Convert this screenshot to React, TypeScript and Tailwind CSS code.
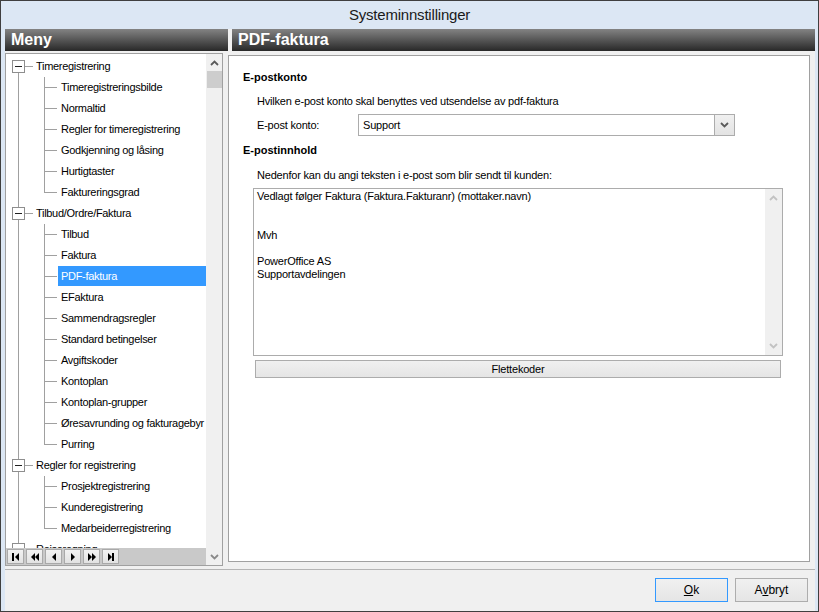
import React from "react";

type Group = { label: string; children: string[] };

const TREE: Group[] = [
  {
    label: "Timeregistrering",
    children: [
      "Timeregistreringsbilde",
      "Normaltid",
      "Regler for timeregistrering",
      "Godkjenning og låsing",
      "Hurtigtaster",
      "Faktureringsgrad",
    ],
  },
  {
    label: "Tilbud/Ordre/Faktura",
    children: [
      "Tilbud",
      "Faktura",
      "PDF-faktura",
      "EFaktura",
      "Sammendragsregler",
      "Standard betingelser",
      "Avgiftskoder",
      "Kontoplan",
      "Kontoplan-grupper",
      "Øresavrunding og fakturagebyr",
      "Purring",
    ],
  },
  {
    label: "Regler for registrering",
    children: ["Prosjektregistrering", "Kunderegistrering", "Medarbeiderregistrering"],
  },
  { label: "Reiseregning", children: ["Reiseregning"] },
];

const SELECTED = "PDF-faktura";

const MAIL_BODY = [
  "Vedlagt følger Faktura (Faktura.Fakturanr) (mottaker.navn)",
  "",
  "",
  "Mvh",
  "",
  "PowerOffice AS",
  "Supportavdelingen",
];

function Chevron({ up = false, color = "#5a5a5a" }: { up?: boolean; color?: string }) {
  return (
    <svg width="9" height="6" viewBox="0 0 9 6">
      <polyline
        points={up ? "1,5 4.5,1.5 8,5" : "1,1 4.5,4.5 8,1"}
        fill="none"
        stroke={color}
        strokeWidth="1.8"
      />
    </svg>
  );
}

function ParentRow({ label, first }: { label: string; first: boolean }) {
  return (
    <div className="relative h-[21px] shrink-0 flex items-center pl-[30px] whitespace-nowrap">
      {!first && <span className="absolute left-[12px] top-0 h-[4px] w-px bg-[#a0a0a0]" />}
      <span className="absolute left-[12px] top-[17px] h-[4px] w-px bg-[#a0a0a0]" />
      <span className="absolute left-[6px] top-[4px] h-[13px] w-[13px] border border-[#8e8e8e] bg-white flex items-center justify-center">
        <span className="h-px w-[7px] bg-[#222]" />
      </span>
      <span className="absolute left-[19px] top-[10px] h-px w-[8px] bg-[#a0a0a0]" />
      <span>{label}</span>
    </div>
  );
}

function ChildRow({ label, last }: { label: string; last: boolean }) {
  const selected = label === SELECTED;
  return (
    <div className="relative h-[21px] shrink-0 whitespace-nowrap">
      <span className="absolute left-[12px] top-0 h-[21px] w-px bg-[#a0a0a0]" />
      <span
        className={`absolute left-[38px] top-0 w-px bg-[#a0a0a0] ${last ? "h-[11px]" : "h-[21px]"}`}
      />
      <span className="absolute left-[39px] top-[10px] h-px w-[12px] bg-[#a0a0a0]" />
      <div
        className={`ml-[52px] h-[20px] px-[3px] flex items-center overflow-hidden ${
          selected ? "bg-[#3399ff] text-white" : ""
        }`}
      >
        {label}
      </div>
    </div>
  );
}

function NavButton({ kind }: { kind: string }) {
  const tri = (dir: "l" | "r", x: number) =>
    dir === "l" ? `${x + 4},0 ${x + 4},8 ${x},4` : `${x},0 ${x},8 ${x + 4},4`;
  let shapes: React.ReactNode = null;
  if (kind === "first")
    shapes = (
      <>
        <rect x="1" y="0" width="2" height="8" fill="#000" />
        <polygon points={tri("l", 4)} fill="#000" />
      </>
    );
  if (kind === "prevPage")
    shapes = (
      <>
        <polygon points={tri("l", 1)} fill="#000" />
        <polygon points={tri("l", 5)} fill="#000" />
      </>
    );
  if (kind === "prev") shapes = <polygon points={tri("l", 3)} fill="#000" />;
  if (kind === "next") shapes = <polygon points={tri("r", 3)} fill="#000" />;
  if (kind === "nextPage")
    shapes = (
      <>
        <polygon points={tri("r", 1)} fill="#000" />
        <polygon points={tri("r", 5)} fill="#000" />
      </>
    );
  if (kind === "last")
    shapes = (
      <>
        <polygon points={tri("r", 2)} fill="#000" />
        <rect x="6" y="0" width="2" height="8" fill="#000" />
      </>
    );
  return (
    <div className="h-[15px] w-[17px] border border-[#a9a9a9] bg-[linear-gradient(to_bottom,#f2f2f2,#e2e2e2)] flex items-center justify-center">
      <svg width="10" height="8" viewBox="0 0 10 8">
        {shapes}
      </svg>
    </div>
  );
}

function MenuTree() {
  return (
    <div className="w-[218px] h-[513px] border border-[#a0a0a0] bg-white flex">
      <div className="flex-1 min-w-0 flex flex-col">
        <div className="flex-1 min-h-0 overflow-hidden pt-[2px] flex flex-col text-[11px] tracking-[-0.3px] text-black">
          {TREE.map((g, gi) => (
            <React.Fragment key={g.label}>
              <ParentRow label={g.label} first={gi === 0} />
              {g.label !== "Reiseregning" &&
                g.children.map((c, ci) => (
                  <ChildRow key={c} label={c} last={ci === g.children.length - 1} />
                ))}
            </React.Fragment>
          ))}
        </div>
        <div className="h-[17px] shrink-0 bg-[#c9c9c9] flex items-center gap-[2px] pl-[1px]">
          {["first", "prevPage", "prev", "next", "nextPage", "last"].map((k) => (
            <NavButton key={k} kind={k} />
          ))}
        </div>
      </div>
      <div className="w-[16px] shrink-0 bg-[#f0f0f0] flex flex-col items-center">
        <div className="h-[17px] flex items-center justify-center">
          <Chevron up />
        </div>
        <div className="h-[17px] w-[15px] bg-[#cdcdcd]" />
        <div className="flex-1" />
        <div className="h-[17px] flex items-center justify-center">
          <Chevron color="#8a8a8a" />
        </div>
      </div>
    </div>
  );
}

function SettingsPanel() {
  return (
    <div className="mt-[2px] w-[582px] h-[507px] border border-[#a0a0a0] bg-white pt-[14px] pl-[14px] text-[11px] tracking-[-0.2px] text-black">
      <div className="h-[14px] leading-[14px] font-bold tracking-normal">E-postkonto</div>
      <div className="mt-[10px] ml-[14px] h-[14px] leading-[14px]">
        Hvilken e-post konto skal benyttes ved utsendelse av pdf-faktura
      </div>
      <div className="mt-[6px] ml-[14px] flex items-center h-[22px]">
        <div className="w-[101px]">E-post konto:</div>
        <div className="w-[377px] h-[22px] border border-[#acacac] bg-white flex items-center">
          <div className="flex-1 pl-[4px]">Support</div>
          <div className="w-[20px] h-[20px] border-l border-[#acacac] bg-[linear-gradient(to_bottom,#f0f0f0,#e3e3e3)] flex items-center justify-center">
            <Chevron />
          </div>
        </div>
      </div>
      <div className="mt-[7px] h-[14px] leading-[14px] font-bold tracking-normal">E-postinnhold</div>
      <div className="mt-[11px] ml-[14px] h-[14px] leading-[14px]">
        Nedenfor kan du angi teksten i e-post som blir sendt til kunden:
      </div>
      <div className="mt-[6px] ml-[10px] w-[530px] h-[168px] border border-[#acacac] bg-white flex">
        <div className="flex-1 pt-[1px] pl-[3px] leading-[13px]">
          {MAIL_BODY.map((l, i) => (
            <div key={i} className="h-[13px] whitespace-nowrap">
              {l}
            </div>
          ))}
        </div>
        <div className="w-[17px] bg-[#f0f0f0] flex flex-col items-center justify-between py-[6px]">
          <Chevron up color="#c2c2c2" />
          <Chevron color="#c2c2c2" />
        </div>
      </div>
      <button className="mt-[4px] ml-[12px] w-[526px] h-[18px] border border-[#acacac] bg-[linear-gradient(to_bottom,#f0f0f0,#e5e5e5)] flex items-center justify-center text-[11px]">
        Flettekoder
      </button>
    </div>
  );
}

export default function App() {
  return (
    <div className="w-[819px] h-[612px] border border-[#3f3f3f] bg-[#dce7f4] flex flex-col font-['Liberation_Sans',Arial,sans-serif] overflow-hidden">
      <div className="h-[28px] shrink-0 flex items-center justify-center text-[15px] tracking-[-0.2px] text-[#1a1a1a]">
        Systeminnstillinger
      </div>
      <div className="flex-1 flex flex-col pl-[4px] pr-[3px] bg-[linear-gradient(to_right,#dce7f4_4px,#f0f0f0_4px,#f0f0f0_calc(100%-3px),#dce7f4_calc(100%-3px))]">
        <div className="h-[22px] shrink-0 flex gap-[4px] text-white font-bold text-[16px]">
          <div className="w-[223px] pl-[6px] flex items-center bg-[linear-gradient(to_bottom,#838383,#282828)]">
            Meny
          </div>
          <div className="flex-1 pl-[6px] flex items-center bg-[linear-gradient(to_bottom,#838383,#282828)]">
            PDF-faktura
          </div>
        </div>
        <div className="pt-[2px] flex items-start gap-[5px]">
          <MenuTree />
          <SettingsPanel />
        </div>
        <div className="mt-[3px] h-px bg-[#b4b4b4]" />
        <div className="pt-[8px] pr-[7px] flex justify-end gap-[7px] text-[12px]">
          <button className="w-[73px] h-[24px] border border-[#3399ff] bg-[linear-gradient(to_bottom,#f0f0f0,#e5e5e5)]">
            <span className="underline">O</span>k
          </button>
          <button className="w-[73px] h-[24px] border border-[#adadad] bg-[linear-gradient(to_bottom,#f0f0f0,#e5e5e5)]">
            A<span className="underline">v</span>bryt
          </button>
        </div>
      </div>
    </div>
  );
}
